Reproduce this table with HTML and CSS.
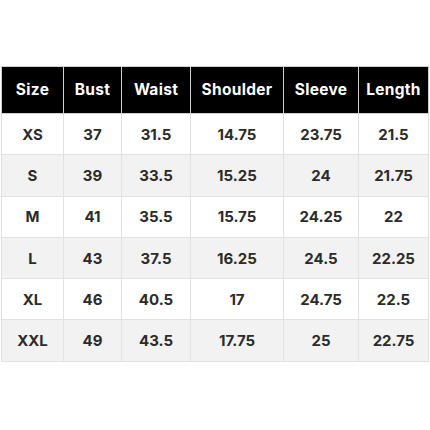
FILE: index.html
```html
<!DOCTYPE html>
<html>
<head>
<meta charset="utf-8">
<link rel="stylesheet" href="styles.css">
</head>
<body>
<div class="wrap">
<table class="size-table">
  <colgroup>
    <col class="c1"><col class="c2"><col class="c3"><col class="c4"><col class="c5"><col class="c6">
  </colgroup>
  <thead>
    <tr><th>Size</th><th>Bust</th><th>Waist</th><th>Shoulder</th><th>Sleeve</th><th>Length</th></tr>
  </thead>
  <tbody>
    <tr><td>XS</td><td>37</td><td>31.5</td><td>14.75</td><td>23.75</td><td>21.5</td></tr>
    <tr><td>S</td><td>39</td><td>33.5</td><td>15.25</td><td>24</td><td>21.75</td></tr>
    <tr><td>M</td><td>41</td><td>35.5</td><td>15.75</td><td>24.25</td><td>22</td></tr>
    <tr><td>L</td><td>43</td><td>37.5</td><td>16.25</td><td>24.5</td><td>22.25</td></tr>
    <tr><td>XL</td><td>46</td><td>40.5</td><td>17</td><td>24.75</td><td>22.5</td></tr>
    <tr><td>XXL</td><td>49</td><td>43.5</td><td>17.75</td><td>25</td><td>22.75</td></tr>
  </tbody>
</table>
</div>
</body>
</html>
```
FILE: styles.css
```css
html, body {
  margin: 0;
  padding: 0;
  background: #ffffff;
}
.wrap {
  padding: 66px 0 0 1px;
}
.size-table {
  border-collapse: collapse;
  table-layout: fixed;
  width: 427px;
  font-family: Inter, "Noto Sans", sans-serif;
  font-weight: 700;
  font-size: 15px;
}
.c1 { width: 62px; }
.c2 { width: 58px; }
.c3 { width: 69px; }
.c4 { width: 93px; }
.c5 { width: 75px; }
.c6 { width: 70px; }
.size-table th {
  background: #000000;
  color: #ffffff;
  height: 44px;
  padding: 0 0 2px 0;
  text-align: center;
  border: 1px solid #cfcfcf;
  font-size: 15.5px;
  letter-spacing: 0.3px;
}
.size-table td {
  height: 40.3px;
  padding: 0;
  text-align: center;
  color: #2b2b2b;
  border: 1px solid #e2e2e2;
}
.size-table tbody tr:nth-child(even) td {
  background: #f2f2f2;
}
```
